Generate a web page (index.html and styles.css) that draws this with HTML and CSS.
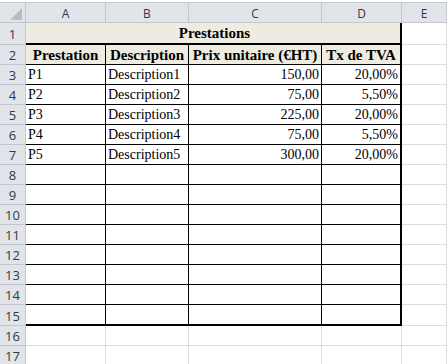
FILE: index.html
```html
<!DOCTYPE html>
<html lang="fr">
<head>
<meta charset="utf-8">
<title>Prestations</title>
<link rel="stylesheet" href="styles.css">
</head>
<body>
<div class="sheet">
  <div class="topstrip"></div>
  <div class="row hdr">
    <div class="corner"><svg width="12" height="12" viewBox="0 0 12 12"><polygon points="12,0 12,12 0,12" fill="#b8bdc5"/></svg></div>
    <div class="ch">A</div><div class="ch">B</div><div class="ch">C</div><div class="ch">D</div><div class="ch">E</div>
  </div>
  <div class="row r1">
    <div class="rh">1</div>
    <div class="title">Prestations</div>
    <div class="c"></div>
  </div>
  <div class="row">
    <div class="rh">2</div>
    <div class="t th">Prestation</div><div class="t th">Description</div><div class="t th">Prix unitaire (€HT)</div><div class="t th last">Tx de TVA</div><div class="c"></div>
  </div>
  <div class="row"><div class="rh">3</div><div class="t">P1</div><div class="t">Description1</div><div class="t num">150,00</div><div class="t num last">20,00%</div><div class="c"></div></div>
  <div class="row"><div class="rh">4</div><div class="t">P2</div><div class="t">Description2</div><div class="t num">75,00</div><div class="t num last">5,50%</div><div class="c"></div></div>
  <div class="row"><div class="rh">5</div><div class="t">P3</div><div class="t">Description3</div><div class="t num">225,00</div><div class="t num last">20,00%</div><div class="c"></div></div>
  <div class="row"><div class="rh">6</div><div class="t">P4</div><div class="t">Description4</div><div class="t num">75,00</div><div class="t num last">5,50%</div><div class="c"></div></div>
  <div class="row"><div class="rh">7</div><div class="t">P5</div><div class="t">Description5</div><div class="t num">300,00</div><div class="t num last">20,00%</div><div class="c"></div></div>
  <div class="row"><div class="rh">8</div><div class="t"></div><div class="t"></div><div class="t"></div><div class="t last"></div><div class="c"></div></div>
  <div class="row"><div class="rh">9</div><div class="t"></div><div class="t"></div><div class="t"></div><div class="t last"></div><div class="c"></div></div>
  <div class="row"><div class="rh">10</div><div class="t"></div><div class="t"></div><div class="t"></div><div class="t last"></div><div class="c"></div></div>
  <div class="row"><div class="rh">11</div><div class="t"></div><div class="t"></div><div class="t"></div><div class="t last"></div><div class="c"></div></div>
  <div class="row"><div class="rh">12</div><div class="t"></div><div class="t"></div><div class="t"></div><div class="t last"></div><div class="c"></div></div>
  <div class="row"><div class="rh">13</div><div class="t"></div><div class="t"></div><div class="t"></div><div class="t last"></div><div class="c"></div></div>
  <div class="row"><div class="rh">14</div><div class="t"></div><div class="t"></div><div class="t"></div><div class="t last"></div><div class="c"></div></div>
  <div class="row r15"><div class="rh">15</div><div class="t"></div><div class="t"></div><div class="t"></div><div class="t last"></div><div class="c"></div></div>
  <div class="row"><div class="rh">16</div><div class="c"></div><div class="c"></div><div class="c"></div><div class="c"></div><div class="c"></div></div>
  <div class="row"><div class="rh">17</div><div class="c"></div><div class="c"></div><div class="c"></div><div class="c"></div><div class="c"></div></div>
</div>
</body>
</html>
```

FILE: styles.css
```css
* { box-sizing: border-box; }
html, body { margin: 0; padding: 0; background: #ffffff; }
.sheet {
  width: 447px;
  height: 364px;
  overflow: hidden;
  font-family: "Liberation Serif", "Times New Roman", serif;
  font-size: 14px;
  color: #000;
}
.topstrip { height: 2px; background: #ffffff; }
.row {
  display: grid;
  grid-template-columns: 26px 80px 83px 133px 80px 1fr;
  height: 20px;
}
.hdr {
  height: 21px;
  border-top: 1px solid #c4c8ce;
}
.corner, .ch, .rh {
  background: #e1e4e9;
  border-right: 1px solid #c4c8ce;
  border-bottom: 1px solid #c4c8ce;
  font-family: "Open Sans", "Liberation Sans", sans-serif;
  font-size: 13px;
  color: #2f3a47;
  display: flex;
  align-items: center;
  justify-content: center;
}
.corner { justify-content: flex-end; align-items: flex-end; padding: 0 3px 2px 0; }
.ch { padding-top: 1px; font-size: 12px; }
.rh { padding-top: 1px; }
.c {
  border-right: 1px solid #dadcdd;
  border-bottom: 1px solid #dadcdd;
}
.r1 { height: 22px; }
.title {
  grid-column: 2 / 6;
  background: #eeece1;
  border-right: 2px solid #000;
  border-bottom: 2px solid #000;
  font-weight: bold;
  font-size: 15px;
  display: flex;
  align-items: center;
  justify-content: center;
  padding: 1px 0 0 3px;
}
.t {
  border-right: 1px solid #000;
  border-bottom: 1px solid #000;
  display: flex;
  align-items: center;
  padding: 1px 2px 0 2px;
  white-space: nowrap;
  overflow: hidden;
}
.t.last { border-right: 2px solid #000; }
.th {
  background: #eeece1;
  font-weight: bold;
  font-size: 15px;
  justify-content: center;
  padding-left: 0;
  padding-right: 0;
}
.num { justify-content: flex-end; padding-right: 2px; }
.r15 { height: 21px; }
.r15 .t { border-bottom: 2px solid #000; }
.r15 .c { border-bottom: 1px solid #dadcdd; }
```
